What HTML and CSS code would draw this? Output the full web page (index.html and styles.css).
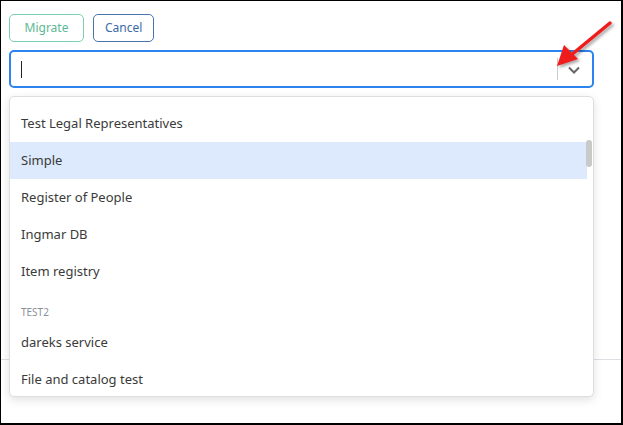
FILE: index.html
```html
<!DOCTYPE html>
<html lang="en">
<head>
<meta charset="utf-8">
<title>Migrate</title>
<link rel="stylesheet" href="styles.css">
</head>
<body>
<div class="frame">
  <div class="panel">
    <div class="actions">
      <button class="btn btn-migrate">Migrate</button>
      <button class="btn btn-cancel">Cancel</button>
    </div>
    <div class="select">
      <div class="select-value"><span class="caret"></span></div>
      <div class="select-indicators">
        <span class="separator"></span>
        <svg class="chevron" width="14" height="10" viewBox="0 0 14 10"><path d="M2 2.5 L7 7.5 L12 2.5" fill="none" stroke="#666" stroke-width="2"/></svg>
      </div>
    </div>
    <div class="footer-line"></div>
  </div>

  <div class="menu">
    <div class="menu-list">
      <div class="option">Test Legal Representatives</div>
      <div class="option focused">Simple</div>
      <div class="option">Register of People</div>
      <div class="option">Ingmar DB</div>
      <div class="option">Item registry</div>
      <div class="group-heading">TEST2</div>
      <div class="option">dareks service</div>
      <div class="option">File and catalog test</div>
    </div>
    <div class="scroll-thumb"></div>
  </div>

  <svg class="pointer" width="70" height="60" viewBox="0 0 70 60">
    <defs>
      <filter id="shade" x="-30%" y="-30%" width="160%" height="160%">
        <feDropShadow dx="2" dy="2" stdDeviation="1.5" flood-color="#000" flood-opacity="0.35"/>
      </filter>
    </defs>
    <g filter="url(#shade)">
      <line x1="60" y1="5" x2="20" y2="38" stroke="#ee1c1c" stroke-width="3.5" stroke-linecap="round"/>
      <polygon points="7,48 14,27 28,41" fill="#ee1c1c"/>
    </g>
  </svg>
</div>
</body>
</html>
```

FILE: styles.css
```css
* { box-sizing: border-box; }

html, body {
  margin: 0;
  padding: 0;
  background: #fff;
}

body {
  font-family: "Noto Sans", "Open Sans", sans-serif;
  color: #333;
}

.frame {
  position: relative;
  width: 623px;
  height: 425px;
  border-top: 1px solid #000;
  border-left: 1px solid #000;
  border-right: 2px solid #000;
  border-bottom: 2px solid #000;
  overflow: hidden;
}

.panel {
  padding: 13px 27px 0 8px;
}

.actions {
  display: flex;
  gap: 9px;
}

.btn {
  height: 28px;
  padding: 0 11px;
  font-family: inherit;
  font-size: 12px;
  background: #fff;
  border-radius: 5px;
  border: 1px solid;
  line-height: 26px;
}

.btn-migrate {
  width: 75px;
  color: #5cb894;
  border-color: #7ccfb0;
}

.btn-cancel {
  width: 61px;
  color: #3b6aa8;
  border-color: #4a74ab;
}

.select {
  margin-top: 8px;
  height: 38px;
  border: 2px solid #2d84f0;
  border-radius: 5px;
  display: flex;
  align-items: center;
}

.select-value {
  flex: 1;
  padding-left: 10px;
  display: flex;
  align-items: center;
}

.caret {
  display: block;
  width: 1px;
  height: 17px;
  background: #222;
}

.select-indicators {
  display: flex;
  align-items: center;
  height: 100%;
}

.separator {
  width: 1px;
  height: 22px;
  background: #ccc;
}

.chevron {
  margin: 1px 11px 0 9px;
}

.footer-line {
  margin: 271px -27px 0 -8px;
  height: 1px;
  background: #dcdfe4;
}

.menu {
  position: absolute;
  left: 8px;
  top: 95px;
  width: 585px;
  height: 301px;
  background: #fff;
  border: 1px solid #dedede;
  border-radius: 5px;
  box-shadow: 0 3px 10px rgba(0, 0, 0, 0.12);
  overflow: hidden;
}

.menu-list {
  padding-top: 8px;
  padding-right: 6px;
}

.option {
  height: 37px;
  line-height: 37px;
  padding-left: 11px;
  font-size: 13px;
  color: #3a3a3a;
}

.option.focused {
  background: #dde9fc;
}

.group-heading {
  height: 34px;
  padding: 16px 0 0 11px;
  font-size: 10px;
  color: #8a8f98;
  line-height: 12px;
}

.scroll-thumb {
  position: absolute;
  right: 1px;
  top: 43px;
  width: 6px;
  height: 27px;
  background: #c9c9c9;
  border-radius: 3px;
}

.pointer {
  position: absolute;
  left: 549px;
  top: 17px;
}
```
